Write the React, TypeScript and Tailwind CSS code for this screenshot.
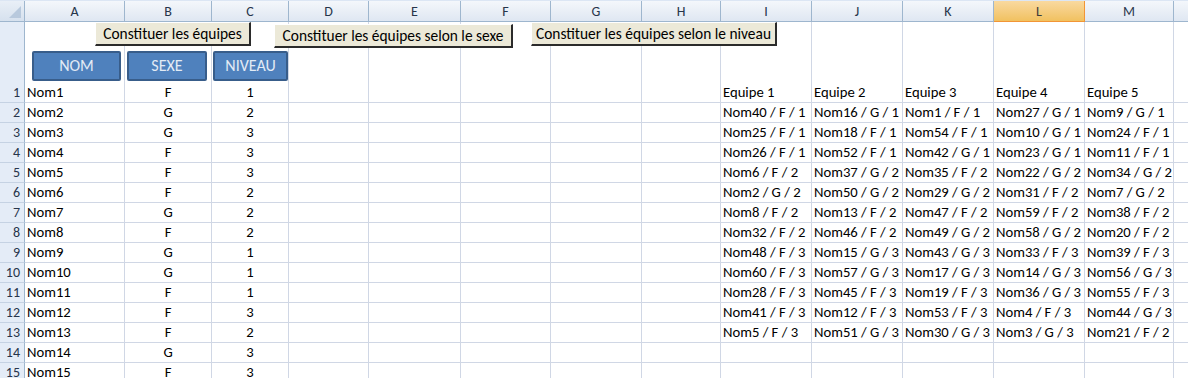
import React from 'react';

// Largeurs des colonnes (bordure droite comprise)
const colonnes = [
  { nom: 'A', largeur: 100 },
  { nom: 'B', largeur: 87 },
  { nom: 'C', largeur: 77 },
  { nom: 'D', largeur: 80 },
  { nom: 'E', largeur: 92 },
  { nom: 'F', largeur: 90 },
  { nom: 'G', largeur: 91 },
  { nom: 'H', largeur: 79 },
  { nom: 'I', largeur: 91 },
  { nom: 'J', largeur: 91 },
  { nom: 'K', largeur: 91 },
  { nom: 'L', largeur: 91 },
  { nom: 'M', largeur: 89 },
  { nom: '', largeur: 40 },
];

const eleves: [string, string, number][] = [
  ['Nom1', 'F', 1],
  ['Nom2', 'G', 2],
  ['Nom3', 'G', 3],
  ['Nom4', 'F', 3],
  ['Nom5', 'F', 3],
  ['Nom6', 'F', 2],
  ['Nom7', 'G', 2],
  ['Nom8', 'F', 2],
  ['Nom9', 'G', 1],
  ['Nom10', 'G', 1],
  ['Nom11', 'F', 1],
  ['Nom12', 'F', 3],
  ['Nom13', 'F', 2],
  ['Nom14', 'G', 3],
  ['Nom15', 'F', 3],
];

const equipes: string[][] = [
  ['Nom40 / F / 1', 'Nom16 / G / 1', 'Nom1 / F / 1', 'Nom27 / G / 1', 'Nom9 / G / 1'],
  ['Nom25 / F / 1', 'Nom18 / F / 1', 'Nom54 / F / 1', 'Nom10 / G / 1', 'Nom24 / F / 1'],
  ['Nom26 / F / 1', 'Nom52 / F / 1', 'Nom42 / G / 1', 'Nom23 / G / 1', 'Nom11 / F / 1'],
  ['Nom6 / F / 2', 'Nom37 / G / 2', 'Nom35 / F / 2', 'Nom22 / G / 2', 'Nom34 / G / 2'],
  ['Nom2 / G / 2', 'Nom50 / G / 2', 'Nom29 / G / 2', 'Nom31 / F / 2', 'Nom7 / G / 2'],
  ['Nom8 / F / 2', 'Nom13 / F / 2', 'Nom47 / F / 2', 'Nom59 / F / 2', 'Nom38 / F / 2'],
  ['Nom32 / F / 2', 'Nom46 / F / 2', 'Nom49 / G / 2', 'Nom58 / G / 2', 'Nom20 / F / 2'],
  ['Nom48 / F / 3', 'Nom15 / G / 3', 'Nom43 / G / 3', 'Nom33 / F / 3', 'Nom39 / F / 3'],
  ['Nom60 / F / 3', 'Nom57 / G / 3', 'Nom17 / G / 3', 'Nom14 / G / 3', 'Nom56 / G / 3'],
  ['Nom28 / F / 3', 'Nom45 / F / 3', 'Nom19 / F / 3', 'Nom36 / G / 3', 'Nom55 / F / 3'],
  ['Nom41 / F / 3', 'Nom12 / F / 3', 'Nom53 / F / 3', 'Nom4 / F / 3', 'Nom44 / G / 3'],
  ['Nom5 / F / 3', 'Nom51 / G / 3', 'Nom30 / G / 3', 'Nom3 / G / 3', 'Nom21 / F / 2'],
];

const police = { fontFamily: 'Carlito, "Open Sans", "Noto Sans", sans-serif' };

function contenuCellule(ligne: number, col: number): { texte: string; centre: boolean } {
  const eleve = eleves[ligne - 1];
  if (col === 0) return { texte: eleve ? eleve[0] : '', centre: false };
  if (col === 1) return { texte: eleve ? eleve[1] : '', centre: true };
  if (col === 2) return { texte: eleve ? String(eleve[2]) : '', centre: true };
  if (col >= 8 && col <= 12) {
    if (ligne === 1) return { texte: `Equipe ${col - 7}`, centre: false };
    const rang = equipes[ligne - 2];
    return { texte: rang ? rang[col - 8] : '', centre: false };
  }
  return { texte: '', centre: false };
}

// Bouton de formulaire (contrôle posé sur la feuille)
function BoutonFormulaire({ label, className }: { label: string; className: string }) {
  return (
    <div
      className={`absolute flex items-center justify-center bg-[#ece9d8] border-t border-l border-t-white border-l-white border-r-2 border-b-2 border-r-[#2b2b2b] border-b-[#2b2b2b] text-[15.4px] text-black leading-none ${className}`}
    >
      {label}
    </div>
  );
}

// Forme bleue posée sur la feuille
function Forme({ label, className }: { label: string; className: string }) {
  return (
    <div
      className={`absolute flex items-center justify-center bg-[#4f81bd] border-2 border-[#385d8a] rounded-[2px] text-[16px] text-[#e3ebf5] ${className}`}
    >
      {label}
    </div>
  );
}

export default function App() {
  const lignes = Array.from({ length: 16 }, (_, i) => i + 1);

  return (
    <div className="relative w-[1188px] h-[378px] overflow-hidden bg-white text-[14.67px] text-black" style={police}>
      {/* En-tête des colonnes */}
      <div className="flex h-[22px] border-t border-t-[#dce6f4]">
        <div className="w-[25px] shrink-0 border-r border-b border-[#9eb6ce] bg-gradient-to-b from-[#e9eff7] to-[#d6e1ee] flex items-end justify-end p-[3px]">
          <div className="w-0 h-0 border-l-[12px] border-l-transparent border-b-[12px] border-b-[#b8c9dd]" />
        </div>
        {colonnes.map((c) => (
          <div
            key={c.nom || 'N'}
            style={{ width: c.largeur }}
            className={`shrink-0 border-r border-b flex items-center justify-center text-[14px] ${
              c.nom === 'L'
                ? 'bg-gradient-to-b from-[#f9d99f] to-[#f1c15f] border-[#f29536] text-[#3b3b3b]'
                : 'bg-gradient-to-b from-[#f4f7fb] to-[#dfe7f2] border-[#9eb6ce] text-[#27354b]'
            }`}
          >
            {c.nom}
          </div>
        ))}
      </div>

      {/* Lignes */}
      {lignes.map((ligne) => (
        <div key={ligne} className={`flex ${ligne === 1 ? 'h-[81px]' : 'h-[20px]'}`}>
          <div className="w-[25px] shrink-0 bg-[#e4ecf7] border-r border-b border-r-[#9eb6ce] border-b-[#c5d2e3] flex items-end justify-end pr-[4px] text-[14px] text-[#27354b] leading-[19px]">
            {ligne}
          </div>
          {colonnes.map((c, ci) => {
            const { texte, centre } = contenuCellule(ligne, ci);
            return (
              <div
                key={ci}
                style={{ width: c.largeur }}
                className={`shrink-0 border-r border-b border-[#d0d7e5] flex items-end px-[2px] leading-[19px] whitespace-nowrap overflow-visible ${
                  centre ? 'justify-center' : 'justify-start'
                }`}
              >
                {texte}
              </div>
            );
          })}
        </div>
      ))}

      {/* Boutons de formulaire */}
      <BoutonFormulaire label="Constituer les équipes" className="left-[95px] top-[22px] w-[156px] h-[24px]" />
      <BoutonFormulaire label="Constituer les équipes selon le sexe" className="left-[274px] top-[24px] w-[239px] h-[24px]" />
      <BoutonFormulaire label="Constituer les équipes selon le niveau" className="left-[531px] top-[22px] w-[246px] h-[24px]" />

      {/* Formes d'en-tête */}
      <Forme label="NOM" className="left-[32px] top-[51px] w-[89px] h-[30px]" />
      <Forme label="SEXE" className="left-[127px] top-[51px] w-[80px] h-[30px]" />
      <Forme label="NIVEAU" className="left-[213px] top-[51px] w-[75px] h-[30px]" />
    </div>
  );
}
